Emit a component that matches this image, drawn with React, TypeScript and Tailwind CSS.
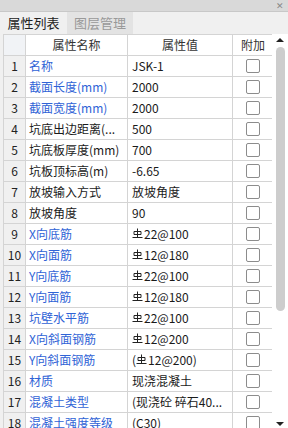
import React from "react";

type Row = { name: string; value: React.ReactNode; blue: boolean };

const Steel = () => (
  <svg width="11" height="11" viewBox="0 0 11 11" className="inline-block mr-[1px] -mt-[2px]" fill="none" stroke="#222" strokeWidth="1">
    <path d="M5.5 0.5 V9.5" />
    <path d="M2 3.5 H9 V6.5 H2 Z" />
    <path d="M0.5 9.5 H10.5" />
  </svg>
);

const rows: Row[] = [
  { name: "名称", value: "JSK-1", blue: true },
  { name: "截面长度(mm)", value: "2000", blue: true },
  { name: "截面宽度(mm)", value: "2000", blue: true },
  { name: "坑底出边距离(...", value: "500", blue: false },
  { name: "坑底板厚度(mm)", value: "700", blue: false },
  { name: "坑板顶标高(m)", value: "-6.65", blue: false },
  { name: "放坡输入方式", value: "放坡角度", blue: false },
  { name: "放坡角度", value: "90", blue: false },
  { name: "X向底筋", value: <><Steel />22@100</>, blue: true },
  { name: "X向面筋", value: <><Steel />12@180</>, blue: true },
  { name: "Y向底筋", value: <><Steel />22@100</>, blue: true },
  { name: "Y向面筋", value: <><Steel />12@180</>, blue: true },
  { name: "坑壁水平筋", value: <><Steel />22@100</>, blue: true },
  { name: "X向斜面钢筋", value: <><Steel />12@200</>, blue: true },
  { name: "Y向斜面钢筋", value: <>(<Steel />12@200)</>, blue: true },
  { name: "材质", value: "现浇混凝土", blue: true },
  { name: "混凝土类型", value: "(现浇砼 碎石40...", blue: true },
  { name: "混凝土强度等级", value: "(C30)", blue: true },
];

export default function App() {
  return (
    <div
      className="w-[288px] h-[428px] overflow-hidden bg-[#f0f0f0] flex flex-col text-[12px] text-[#1a1a1a]"
      style={{ fontFamily: '"Noto Sans CJK SC", "Noto Sans", sans-serif' }}
    >
      <div className="h-[12px] shrink-0 bg-[#d9d9d9] border-b border-[#c8c8c8] flex items-center justify-end pr-[4px]">
        <span className="text-[9px] leading-none text-[#888]">✕</span>
      </div>
      <div className="h-[22px] shrink-0 flex items-stretch bg-[#f0f0f0]">
        <div className="w-[67px] flex items-center justify-center text-[13px] text-[#222] bg-[#f0f0f0]">属性列表</div>
        <div className="w-[66px] flex items-center justify-center text-[13px] text-[#999] bg-[#e3e3e3]">图层管理</div>
      </div>
      <div className="flex-1 flex pl-[3px] min-h-0">
        <div className="w-[269px] bg-white border-l border-t border-[#d4d4d4] overflow-hidden">
          <div className="flex h-[21px] border-b border-[#d4d4d4] text-[#333]">
            <div className="w-[22px] shrink-0 bg-[#f1f3f6] border-r border-[#d4d4d4]" />
            <div className="w-[102px] shrink-0 border-r border-[#d4d4d4] flex items-center justify-center">属性名称</div>
            <div className="w-[105px] shrink-0 border-r border-[#d4d4d4] flex items-center justify-center">属性值</div>
            <div className="w-[40px] shrink-0 flex items-center justify-center">附加</div>
          </div>
          {rows.map((r, i) => (
            <div key={i} className="flex h-[21px] border-b border-[#d4d4d4]">
              <div className="w-[22px] shrink-0 bg-[#f0f0f0] border-r border-[#d4d4d4] flex items-center justify-center text-[#222]">{i + 1}</div>
              <div className={`w-[102px] shrink-0 border-r border-[#d4d4d4] flex items-center pl-[3px] whitespace-nowrap overflow-hidden ${r.blue ? "text-[#2f63d6]" : "text-[#1a1a1a]"}`}>{r.name}</div>
              <div className="w-[105px] shrink-0 border-r border-[#d4d4d4] flex items-center pl-[4px] whitespace-nowrap overflow-hidden">{r.value}</div>
              <div className="w-[40px] shrink-0 flex items-center justify-center">
                <div className="w-[14px] h-[14px] rounded-[2px] border border-[#8c8c8c] bg-white" />
              </div>
            </div>
          ))}
        </div>
        <div className="w-[16px] bg-white relative flex flex-col items-center">
          <div className="mt-[4px] w-0 h-0 border-l-[4px] border-r-[4px] border-b-[4px] border-l-transparent border-r-transparent border-b-[#222]" />
          <div className="mt-[5px] w-[9px] h-[264px] rounded-[5px] bg-[#cdcdcd]" />
          <div className="absolute bottom-[2px] w-0 h-0 border-l-[4px] border-r-[4px] border-t-[4px] border-l-transparent border-r-transparent border-t-[#222]" />
        </div>
      </div>
    </div>
  );
}
